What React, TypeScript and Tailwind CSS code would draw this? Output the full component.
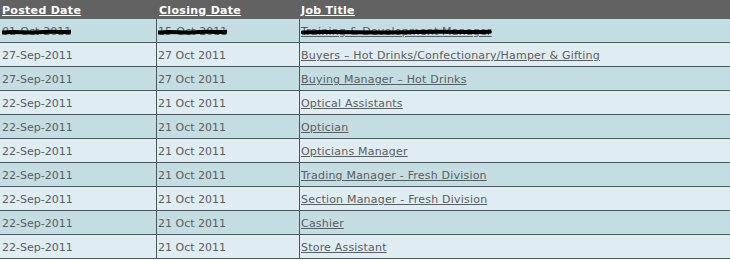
import React from "react";

const rows: [string, string, string][] = [
  ["01-Oct-2011", "15-Oct-2011", "Training & Development Manager"],
  ["27-Sep-2011", "27 Oct 2011", "Buyers \u2013 Hot Drinks/Confectionary/Hamper & Gifting"],
  ["27-Sep-2011", "27 Oct 2011", "Buying Manager \u2013 Hot Drinks"],
  ["22-Sep-2011", "21 Oct 2011", "Optical Assistants"],
  ["22-Sep-2011", "21 Oct 2011", "Optician"],
  ["22-Sep-2011", "21 Oct 2011", "Opticians Manager"],
  ["22-Sep-2011", "21 Oct 2011", "Trading Manager - Fresh Division"],
  ["22-Sep-2011", "21 Oct 2011", "Section Manager - Fresh Division"],
  ["22-Sep-2011", "21 Oct 2011", "Cashier"],
  ["22-Sep-2011", "21 Oct 2011", "Store Assistant"],
];

function Scribble() {
  return (
    <svg
      className="absolute left-0 top-1/2 -translate-y-1/2 w-full h-[8px] pointer-events-none"
      viewBox="0 0 100 8"
      preserveAspectRatio="none"
    >
      <path
        d="M1 4.4 C 20 3.4, 40 5.2, 60 4 S 90 4.8, 99 3.8"
        stroke="#000"
        strokeWidth={4}
        strokeLinecap="round"
        fill="none"
        vectorEffect="non-scaling-stroke"
      />
    </svg>
  );
}

export default function App() {
  return (
    <div className="w-[730px] h-[260px] bg-white text-[11px] leading-[16px] text-[#5c5c5c] overflow-hidden font-['DejaVu_Sans',sans-serif]">
      <div className="flex h-[19px] pt-[2px] bg-[#626262] text-white font-bold items-center tracking-[0.3px]">
        <div className="w-[157px] pl-[2px] underline">Posted Date</div>
        <div className="w-[143px] pl-[2px] underline">Closing Date</div>
        <div className="flex-1 pl-[1px] underline">Job Title</div>
      </div>
      {rows.map((r, i) => (
        <div
          key={i}
          className={`flex h-[24px] border-b border-[#4a575c] ${i % 2 === 0 ? "bg-[#c4dde3]" : "bg-[#dfecf1]"}`}
        >
          <div className="w-[157px] pl-[2px] pt-[3px] border-r border-[#4a575c] flex items-center">
            <span className="relative">
              {r[0]}
              {i === 0 && <Scribble />}
            </span>
          </div>
          <div className="w-[143px] pl-[1px] pt-[3px] border-r border-[#4a575c] flex items-center">
            <span className="relative">
              {r[1]}
              {i === 0 && <Scribble />}
            </span>
          </div>
          <div className="flex-1 pl-[1px] pt-[3px] flex items-center tracking-[0.2px]">
            <a className="relative underline text-[#5c5c5c]" href="#">
              {r[2]}
              {i === 0 && <Scribble />}
            </a>
          </div>
        </div>
      ))}
    </div>
  );
}
